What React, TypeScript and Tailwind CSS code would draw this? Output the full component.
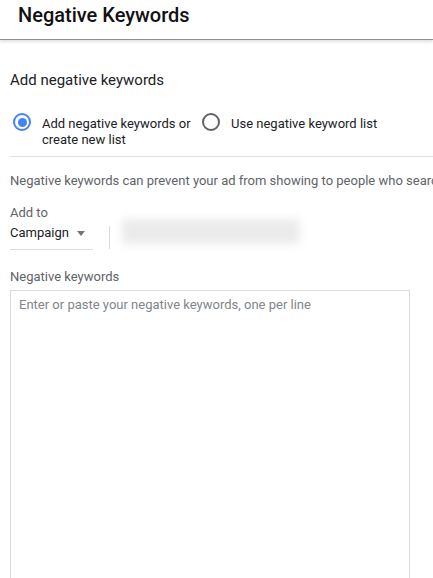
import React from "react";

export default function App() {
  return (
    <div className="w-[433px] h-[578px] overflow-hidden bg-white font-['Roboto',sans-serif]">
      <div className="h-[40px] box-border border-b border-[#8e8e8e] shadow-[0_2px_3px_rgba(0,0,0,0.12)] px-[18px] pt-[1px] relative z-10 bg-white">
        <div className="text-[20px] leading-[28px] font-medium text-[#111]">Negative Keywords</div>
      </div>
      <div className="pl-[10px]">
        <div className="mt-[30px] text-[15px] leading-[20px] text-[#202124]">Add negative keywords</div>
        <div className="mt-[23px] flex items-start pl-[3px]">
          <div className="w-[18px] h-[18px] rounded-full border-2 border-[#4285f4] flex items-center justify-center shrink-0 box-border">
            <div className="w-[9px] h-[9px] rounded-full bg-[#4285f4]" />
          </div>
          <div className="ml-[11px] w-[152px] pt-[3px] text-[13px] leading-[16px] text-[#202124]">
            Add negative keywords or create new list
          </div>
          <div className="ml-[8px] w-[18px] h-[18px] rounded-full border-2 border-[#5f6368] shrink-0 box-border" />
          <div className="ml-[11px] pt-[3px] text-[13px] leading-[16px] text-[#202124]">Use negative keyword list</div>
        </div>
        <div className="mt-[8px] h-px bg-[#e0e0e0]" />
        <div className="mt-[16px] text-[13px] leading-[16px] text-[#5f6368] whitespace-nowrap overflow-hidden">
          Negative keywords can prevent your ad from showing to people who searc
        </div>
        <div className="mt-[16px] text-[13px] leading-[16px] text-[#5f6368]">Add to</div>
        <div className="mt-[4px] flex items-start">
          <div className="w-[83px] pb-[8px] border-b border-[#dadce0] flex items-center">
            <span className="text-[13px] leading-[16px] text-[#202124]">Campaign</span>
            <span className="ml-[8px] mt-[1px] w-0 h-0 border-x-[4px] border-x-transparent border-t-[5px] border-t-[#757575]" />
          </div>
          <div className="ml-[16px] mt-[1px] w-px h-[23px] bg-[#dadce0]" />
          <div className="ml-[12px] -mt-[6px] w-[178px] h-[25px] bg-[#ebebeb] blur-[4px]" />
        </div>
        <div className="mt-[19px] text-[13px] leading-[16px] text-[#5f6368]">Negative keywords</div>
        <textarea
          className="block mt-[5px] w-[400px] h-[320px] box-border border border-[#dadce0] pl-[8px] pt-[6px] text-[13px] leading-[16px] resize-none outline-none font-['Roboto',sans-serif] placeholder:text-[#80868b]"
          placeholder="Enter or paste your negative keywords, one per line"
        />
      </div>
    </div>
  );
}
